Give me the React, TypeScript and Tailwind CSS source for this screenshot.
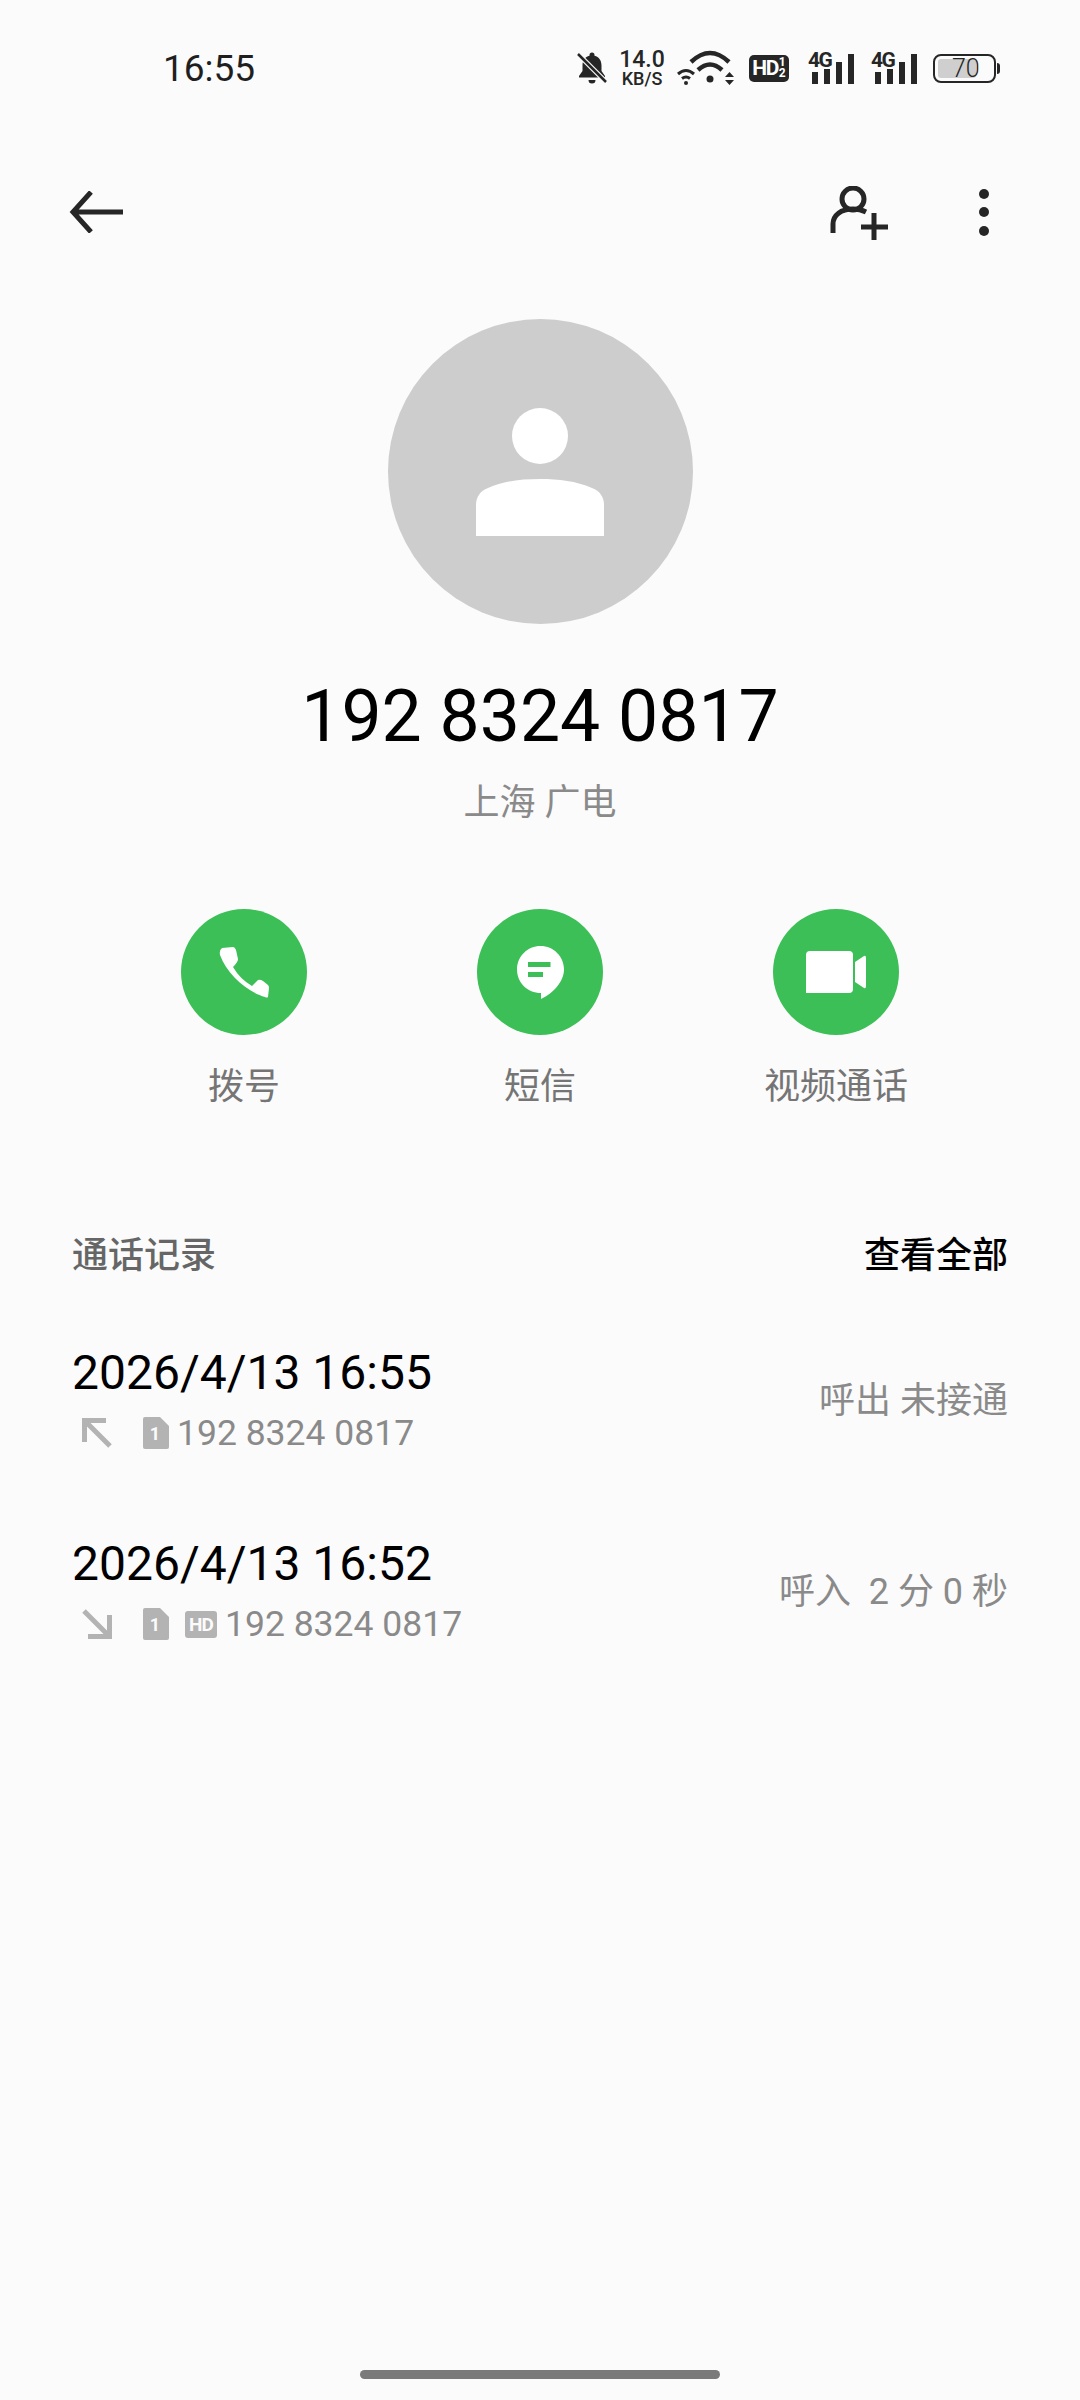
const sans = "font-['Roboto','Noto_Sans_CJK_SC',sans-serif]";

const SignalIcon = () => (
  <div className="relative h-[32px] w-[46px]">
    <span className="absolute top-[-3px] left-0 text-[21px] leading-[22px] font-bold tracking-[-1.5px] text-[#262626]">4G</span>
    <div className="absolute right-0 bottom-0 flex items-end gap-[6px]">
      <div className="h-[12px] w-[6px] bg-[#262626]" />
      <div className="h-[15px] w-[6px] bg-[#262626]" />
      <div className="h-[22px] w-[6px] bg-[#262626]" />
      <div className="h-[30px] w-[6px] bg-[#262626]" />
    </div>
  </div>
);

const StatusIcons = () => (
  <div className="flex items-center">
    <svg width="32" height="34" viewBox="0 0 32 34" className="mr-[11px]">
      <path d="M16 1.500a2.500 2.500 0 0 1 2.500 2.500v.8c4.600 1.100 7 5 7 9.700v5.500l3.500 5v1.500H3v-1.500l3.500-5v-5.500c0-4.700 2.400-8.600 7-9.700V4A2.500 2.500 0 0 1 16 1.500zM12.500 29h7a3.500 3.500 0 0 1-7 0z" fill="#262626" />
      <path d="M2 3l28 28" stroke="#fbfbfb" strokeWidth="5" />
      <path d="M2 3l28 28" stroke="#262626" strokeWidth="2.500" />
    </svg>
    <div className="mr-[11px] flex w-[46px] flex-col items-center text-[#262626]">
      <span className="text-[23px] leading-[21px] font-medium">14.0</span>
      <span className="text-[18px] leading-[17px] font-medium">KB/S</span>
    </div>
    <svg width="60" height="36" viewBox="0 0 60 36" className="mr-[13px]" fill="none" stroke="#262626">
      <path d="M2 24Q10 17 18 24" strokeWidth="3" />
      <path d="M6 28.500Q10 25.500 14 28.500" strokeWidth="3" />
      <circle cx="10" cy="33" r="2" fill="#262626" stroke="none" />
      <path d="M15 12Q34-6 53 12" strokeWidth="4.500" />
      <path d="M22 20Q34 9 46 20" strokeWidth="4.500" />
      <circle cx="34" cy="29" r="3.500" fill="#262626" stroke="none" />
      <path d="M49 27h9l-4.500-5zM49 30h9l-4.500 5z" fill="#262626" stroke="none" />
    </svg>
    <div className="mr-[19px] flex h-[27px] w-[40px] items-center justify-center rounded-[5px] bg-[#262626] text-white">
      <span className="text-[21px] leading-none font-bold tracking-[-1.5px]">HD</span>
      <span className="ml-[1px] flex flex-col items-center text-[12px] leading-[11px] font-bold">
        <span>1</span>
        <span>2</span>
      </span>
    </div>
    <SignalIcon />
    <div className="w-[17px]" />
    <SignalIcon />
    <div className="ml-[16px] flex items-center">
      <div className="flex h-[29px] w-[63px] items-center rounded-[8px] border-2 border-[#262626] p-[3px]">
        <div className="relative flex h-full w-[38px] items-center rounded-[3px] bg-[#cfcfcf]">
          <span className="absolute left-[14px] text-[25px] leading-none font-light text-[#262626]">70</span>
        </div>
      </div>
      <div className="ml-[1px] h-[11px] w-[3px] rounded-r-sm bg-[#262626]" />
    </div>
  </div>
);

const ActionButton = ({ label, children }: { label: string; children: React.ReactNode }) => (
  <div className="flex w-[296px] flex-col items-center">
    <div className="flex h-[126px] w-[126px] items-center justify-center rounded-full bg-[#3bbf56]">{children}</div>
    <span className="mt-[25px] text-[36px] leading-[54px] text-[#757575]">{label}</span>
  </div>
);

const Sim = () => (
  <svg width="26" height="32" viewBox="0 0 26 32" className="ml-[31px] shrink-0">
    <path d="M2 0h15l9 9v21a2 2 0 0 1-2 2H2a2 2 0 0 1-2-2V2a2 2 0 0 1 2-2z" fill="#b3b3b3" />
    <text x="12" y="23" textAnchor="middle" fontSize="18" fontWeight="700" fill="#fbfbfb">1</text>
  </svg>
);

const CallRow = ({ time, outgoing, hd, status }: { time: string; outgoing?: boolean; hd?: boolean; status: string }) => (
  <div className="flex h-[191px] items-center justify-between">
    <div className="flex flex-col pb-[5px]">
      <span className="text-[48px] leading-[64px] text-black">{time}</span>
      <div className="mt-[6px] flex h-[44px] items-center">
        <svg width="30" height="30" viewBox="0 0 30 30" className="ml-[10px] shrink-0" fill="none" stroke="#b3b3b3" strokeWidth="5">
          {outgoing ? <path d="M28 28L4 4M2.500 24V2.500H24" /> : <path d="M2 2l24 24M27.500 6v21.500H6" />}
        </svg>
        <Sim />
        {hd && (
          <div className="ml-[16px] flex h-[27px] w-[32px] items-center justify-center rounded-[3px] bg-[#b3b3b3] text-[19px] leading-none font-bold tracking-[-1px] text-[#fbfbfb]">
            HD
          </div>
        )}
        <span className="ml-[8px] text-[35.500px] leading-[44px] text-[#8a8a8a]">192 8324 0817</span>
      </div>
    </div>
    <span className="text-[36px] leading-[54px] text-[#8a8a8a]">{status}</span>
  </div>
);

export default function App() {
  return (
    <div className={`flex h-[2400px] w-[1080px] flex-col bg-[#fbfbfb] ${sans}`}>
      <div className="flex h-[136px] items-center justify-between pr-[80px] pl-[163px]">
        <span className="text-[37px] leading-none text-[#1f1f1f]">16:55</span>
        <StatusIcons />
      </div>

      <div className="flex h-[152px] items-center justify-between pr-[91px] pl-[68px]">
        <svg width="55" height="42" viewBox="0 0 55 42" fill="none" stroke="#262626" strokeWidth="5">
          <path d="M55 21H5M23 1L5 21l18 20" />
        </svg>
        <div className="flex items-center gap-[91px]">
          <svg width="58" height="54" viewBox="0 0 58 54" fill="none" stroke="#262626" strokeWidth="5" className="mt-[1px]">
            <circle cx="23" cy="13" r="11" />
            <path d="M3 47V38c0-9 8-15 20-15 5 0 9 1 13 3" />
            <path d="M31 41H58M44 27V54" />
          </svg>
          <div className="flex flex-col gap-[8.500px]">
            <div className="h-[10px] w-[10px] rounded-full bg-[#262626]" />
            <div className="h-[10px] w-[10px] rounded-full bg-[#262626]" />
            <div className="h-[10px] w-[10px] rounded-full bg-[#262626]" />
          </div>
        </div>
      </div>

      <div className="mt-[31px] flex flex-col items-center">
        <div className="flex h-[305px] w-[305px] items-center justify-center rounded-full bg-[#cdcdcd]">
          <svg width="128" height="128" viewBox="0 0 128 128">
            <circle cx="64" cy="28" r="28" fill="#fff" />
            <path d="M0 128V97c0-8 4-14 12-17 16-7 33-9 52-9s36 2 52 9c8 3 12 9 12 17v31z" fill="#fff" />
          </svg>
        </div>
        <span className="mt-[51px] text-[71.500px] leading-[84px] text-black">192 8324 0817</span>
        <span className="mt-[17px] text-[36px] leading-[54px] text-[#8a8a8a]">上海 广电</span>
      </div>

      <div className="mt-[79px] flex justify-center">
        <ActionButton label="拨号">
          <svg width="50" height="51" viewBox="0 0 50 51" fill="#fff">
            <path d="M3 1L14 0Q16 0 17 3L19 12Q19 15 14 20Q21 32 33 39L39 33Q41 32 44 34L49 38Q50 39 50 41L49 50Q48 51 46 50C28 45 8 27 1 8Q0 3 3 1z" />
          </svg>
        </ActionButton>
        <ActionButton label="短信">
          <svg width="47" height="53" viewBox="0 0 47 53">
            <path d="M23.500 0C36.500 0 47 10.500 47 23.500 47 35 37 47 24 53V47C10.500 47 0 36.500 0 23.500 0 10.500 10.500 0 23.500 0z" fill="#fff" />
            <rect x="11" y="16" width="22.500" height="5" fill="#3bbf56" />
            <rect x="11" y="26" width="15" height="5" fill="#3bbf56" />
          </svg>
        </ActionButton>
        <ActionButton label="视频通话">
          <svg width="60" height="42" viewBox="0 0 60 42" fill="#fff">
            <path d="M4 0h39a4 4 0 0 1 4 4v34a4 4 0 0 1-4 4H0V4a4 4 0 0 1 4-4z" />
            <path d="M49 11l9-6q2-1 2 2v28q0 3-2 2l-9-6z" />
          </svg>
        </ActionButton>
      </div>

      <div className="mt-[115px] px-[72px]">
        <div className="flex h-[54px] items-center justify-between">
          <span className="text-[36px] font-medium text-[#666666]">通话记录</span>
          <span className="text-[36px] font-medium text-black">查看全部</span>
        </div>
        <div className="mt-[22px]">
          <CallRow time="2026/4/13 16:55" outgoing status="呼出 未接通" />
          <CallRow time="2026/4/13 16:52" hd status={"呼入\u00a0\u00a02 分 0 秒"} />
        </div>
      </div>

      <div className="mt-auto mb-[21px] h-[9px] w-[360px] self-center rounded-full bg-[#7a7a7a]" />
    </div>
  );
}
